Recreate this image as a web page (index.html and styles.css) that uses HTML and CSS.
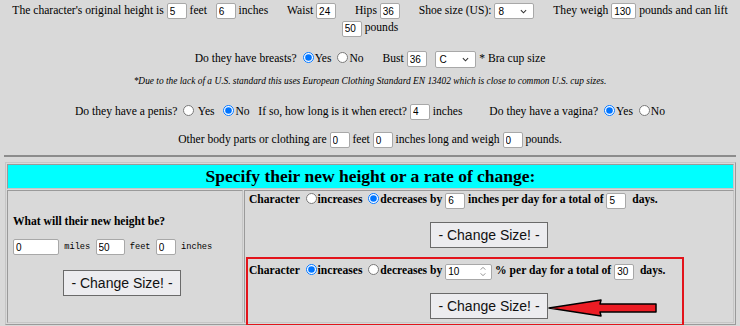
FILE: index.html
```html
<!DOCTYPE html>
<html lang="en">
<head>
    <meta charset="UTF-8">
    <meta name="viewport" content="width=device-width, initial-scale=1.0">
    <title>Size Changer</title>
    <link rel="stylesheet" href="styles.css">
</head>
<body>
    <form id="sizer" action="" method="post">
        <div class="row height">
            The character's original height is <input type="text" class="tiny" value="5"> feet &nbsp; <input type="text" class="tiny" value="6"> inches
            <span class="fld">Waist <input type="text" class="tiny" value="24"></span>
            <span class="fld">Hips <input type="text" class="tiny" value="36"></span>
            <span class="fld">Shoe size (US): <span class="sel shoe"><select><option>8</option></select><svg viewBox="0 0 8 5"><path d="M1 1l3 3 3-3"/></svg></span></span>
            <span class="fld">They weigh <input type="text" class="short" value="130"> pounds and can lift</span><br>
            <input type="text" class="tiny" value="50"> pounds
        </div>

        <div class="row breasts">
            Do they have breasts? <input type="radio" name="breasts" checked>Yes <input type="radio" name="breasts">No
            <span class="fld">Bust <input type="text" class="tiny" value="36"> &nbsp; <span class="sel cup"><select><option>C</option></select><svg viewBox="0 0 8 5"><path d="M1 1l3 3 3-3"/></svg></span> * Bra cup size</span>
        </div>
        <div class="note">*Due to the lack of a U.S. standard this uses European Clothing Standard EN 13402 which is close to common U.S. cup sizes.</div>

        <div class="row penis">
            Do they have a penis? <input type="radio" name="penis"> Yes &nbsp;<input type="radio" name="penis" checked>No &nbsp; If so, how long is it when erect? <input type="text" class="tiny" value="4"> inches
            <span class="fld wide">Do they have a vagina? <input type="radio" name="vagina" checked>Yes <input type="radio" name="vagina">No</span>
        </div>

        <div class="row other">
            Other body parts or clothing are <input type="text" class="tiny" value="0"> feet <input type="text" class="tiny" value="0"> inches long and weigh <input type="text" class="tiny" value="0"> pounds.
        </div>

        <hr>

        <table class="grow">
            <tr>
                <th colspan="2">Specify their new height or a rate of change:</th>
            </tr>
            <tr>
                <td class="target">
                    <p class="ask">What will their new height be?</p>
                    <div class="mono">
                        <input type="text" class="long" value="0"> miles <input type="text" class="mid" value="50"> feet <input type="text" class="tiny" value="0"> inches
                    </div>
                    <div class="go"><button type="button">- Change Size! -</button></div>
                </td>
                <td class="rate">
                    <div class="step">
                        <div class="line">Character <input type="radio" name="dir1">increases <input type="radio" name="dir1" checked>decreases by <input type="text" class="tiny" value="6"> inches per day for a total of <input type="text" class="tiny" value="5"> &nbsp;days.</div>
                        <div class="go"><button type="button">- Change Size! -</button></div>
                    </div>
                    <div class="step hl">
                        <div class="line">Character <input type="radio" name="dir2" checked>increases <input type="radio" name="dir2">decreases by <span class="num"><input type="text" value="10"><svg viewBox="0 0 8 14"><path d="M1.5 5l2.5-2.5 2.5 2.5M1.5 9l2.5 2.5 2.5-2.5"/></svg></span> % per day for a total of <input type="text" class="tiny" value="30"> &nbsp;days.</div>
                        <div class="go"><button type="button">- Change Size! -</button></div>
                        <svg class="arrow" viewBox="0 0 110 20" width="110" height="20"><polygon points="1,9 53,1 52,5 108,5 108,13 52,13 53,17"/></svg>
                    </div>
                </td>
            </tr>
        </table>
    </form>
</body>
</html>
```

FILE: styles.css
```css
* {
    box-sizing: border-box;
}
body {
    margin: 0;
    padding: 2px 4px 0;
    background-color: #d9d9d9;
    color: #000;
    font-family: "Liberation Serif", "Times New Roman", serif;
    font-size: 11.6px;
}
.row {
    text-align: center;
    line-height: 17px;
}
.breasts {
    margin-top: 13px;
}
.note {
    margin-top: 7px;
    text-align: center;
    font-style: italic;
    font-size: 9.4px;
    line-height: 13px;
}
.penis {
    margin-top: 15px;
}
.other {
    margin-top: 11px;
}
.fld {
    margin-left: 16px;
}
.fld.wide {
    margin-left: 24px;
}
input[type="text"] {
    height: 16px;
    padding: 0 2px;
    border: 1px solid #a8a8a8;
    border-radius: 2px;
    background-color: #fff;
    font-family: "Liberation Sans", Arial, sans-serif;
    font-size: 10px;
    vertical-align: middle;
}
input.tiny {
    width: 20px;
}
input.short {
    width: 25px;
}
input.mid {
    width: 29px;
}
input.long {
    width: 46px;
}
input[type="radio"] {
    width: 11px;
    height: 11px;
    margin: 0 1px 0 3px;
    vertical-align: -1px;
}
.sel {
    position: relative;
    display: inline-block;
    vertical-align: middle;
}
.sel select {
    appearance: none;
    height: 16px;
    padding: 0 0 0 3px;
    border: 1px solid #a8a8a8;
    border-radius: 2px;
    background-color: #fff;
    font-family: "Liberation Sans", Arial, sans-serif;
    font-size: 10px;
    display: block;
}
.shoe select {
    width: 40px;
}
.cup select {
    width: 41px;
    height: 17px;
}
.sel svg {
    position: absolute;
    right: 7px;
    top: 6px;
    width: 7px;
    height: 5px;
    fill: none;
    stroke: #333;
    stroke-width: 1.2;
}
hr {
    margin: 7px 0 0;
    border: 0;
    border-top: 2px solid #8c8c8c;
}
.grow {
    width: 731px;
    margin: 5px 0 0 1px;
    border: 1px solid;
    border-color: #c6c6c6 #9a9a9a #9a9a9a #c6c6c6;
    border-spacing: 1px;
}
.grow th,
.grow td {
    border: 1px solid;
    border-color: #9a9a9a #c6c6c6 #c6c6c6 #9a9a9a;
}
.grow th {
    background-color: #00ffff;
    font-size: 17.5px;
    line-height: 21px;
    padding: 1px;
}
.target {
    width: 236px;
    vertical-align: top;
    padding: 22px 5px 0;
}
.ask {
    margin: 0;
    height: 17px;
    font-weight: bold;
    line-height: 17px;
}
.mono {
    margin-top: 9px;
    height: 16px;
    font-family: "Liberation Mono", "Courier New", monospace;
    font-size: 8.7px;
    line-height: 16px;
}
.go {
    height: 26px;
}
.go button {
    display: block;
    margin: 0 auto;
}
.target .go {
    margin-top: 15px;
    padding-right: 6px;
}
button {
    width: 118px;
    height: 26px;
    padding: 0;
    border: 1px solid #6a6a6a;
    border-radius: 0;
    background-color: #ececef;
    color: #111;
    font-family: "Liberation Sans", Arial, sans-serif;
    font-size: 14px;
    cursor: pointer;
}
.rate {
    vertical-align: top;
    padding: 0 4px 3px;
}
.line {
    height: 17px;
    font-weight: bold;
    line-height: 17px;
}
.step .go {
    margin-top: 14px;
}
.hl {
    position: relative;
    margin-top: 14px;
}
.hl::before {
    content: "";
    position: absolute;
    left: -3px;
    top: -5px;
    width: 434px;
    height: 65px;
    border: 2px solid #e3141b;
}
.num {
    display: inline-flex;
    align-items: center;
    width: 47px;
    height: 16px;
    border: 1px solid #a8a8a8;
    border-radius: 2px;
    background-color: #fff;
    vertical-align: middle;
}
.num input[type="text"] {
    width: 31px;
    border: 0;
    height: 14px;
}
.num svg {
    width: 8px;
    height: 13px;
    margin-left: 2px;
    fill: none;
    stroke: #888;
    stroke-width: 1;
}
.arrow {
    position: absolute;
    left: 299px;
    top: 37px;
    fill: #ec1c24;
    stroke: #000;
    stroke-width: 1.5;
    stroke-linejoin: round;
}
```
